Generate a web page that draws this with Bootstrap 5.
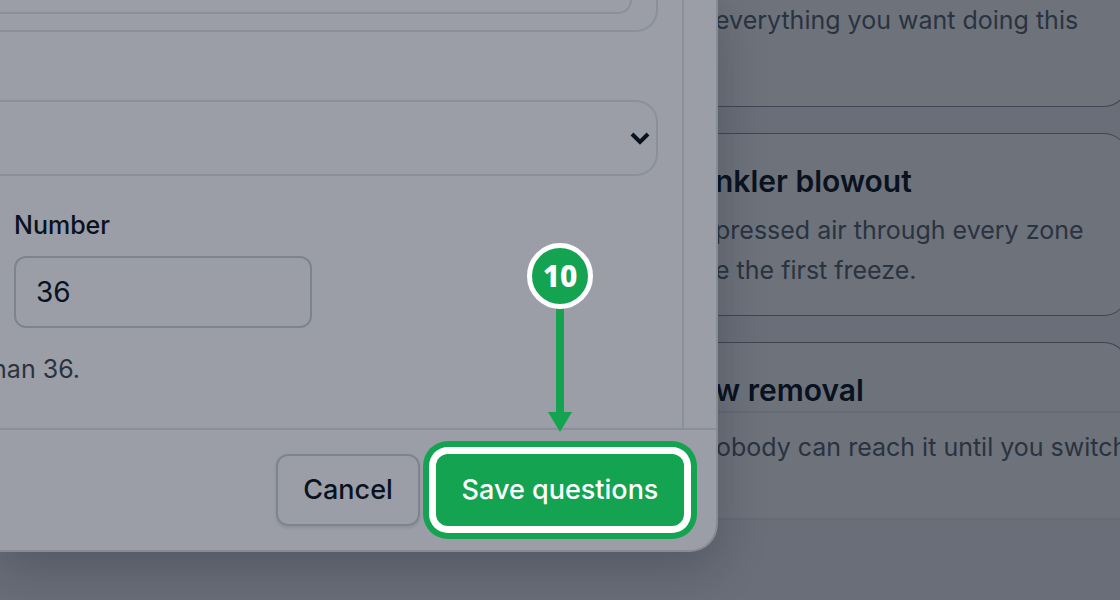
<!DOCTYPE html>
<html lang="en">
<head>
<meta charset="utf-8">
<meta name="viewport" content="width=device-width, initial-scale=1">
<title>Edit questions</title>
<link href="https://cdn.jsdelivr.net/npm/bootstrap@5.3.0/dist/css/bootstrap.min.css" rel="stylesheet">
<style>
  :root { --ink: #0a121f; --muted-ink: #2a3340; --surface: #9b9ea6; --line: #8b8f98; --field-line: #7e848e; --green: #14a350; }
  body { background: #696e79; color: var(--ink); font-family: Inter, "Liberation Sans", sans-serif; font-size: 25px; line-height: 40px; overflow: hidden; }
  .stage { display: grid; grid-template-columns: minmax(0, 1fr) 402px; min-height: 100vh; }
  .editor { background: var(--surface); border: 2px solid #878b94; border-width: 0 2px 2px 0; border-radius: 0 0 28px 0; box-shadow: 0 16px 48px rgba(20, 26, 38, .26); z-index: 2; }
  .pane { margin-right: 32px; padding-right: 24px; border-right: 2px solid var(--line); height: 428px; overflow: hidden; }
  .group-outer { height: 32px; padding-right: 24px; border: 2px solid var(--line); border-width: 0 2px 2px 0; border-radius: 0 0 22px 0; }
  .group-inner { height: 14px; border: 2px solid var(--line); border-width: 0 2px 2px 0; border-radius: 0 0 22px 0; }
  .picker { height: 76px; margin-top: 68px; border: 2px solid var(--line); border-left: 0; border-radius: 0 22px 22px 0; color: var(--ink); appearance: none;
    background: transparent url("data:image/svg+xml,%3Csvg xmlns='http://www.w3.org/2000/svg' width='20' height='16'%3E%3Cpath d='M2 4l8 8 8-8' fill='none' stroke='%230a121f' stroke-width='4'/%3E%3C/svg%3E") no-repeat right 6px center / 20px 16px; }
  .field { width: 298px; margin: 29px 0 0 14px; }
  .field label { font-weight: 500; }
  .field input { height: 72px; margin-top: 11px; padding: 0 20px; border: 2px solid var(--field-line); border-radius: 12px; background: transparent; color: var(--ink); font-size: 28px; }
  .hint { margin-top: 21px; color: var(--muted-ink); width: 80px; white-space: nowrap; }
  .actions { border-top: 2px solid var(--line); padding: 24px 32px 24px 0; gap: 16px; }
  .actions .btn { height: 72px; padding: 0; border-radius: 12px; font-size: 27px; font-weight: 500; }
  .btn-plain, .btn-plain:hover { width: 144px; border: 2px solid var(--field-line); color: var(--ink); box-shadow: 0 2px 3px rgba(20, 26, 38, .1); }
  .btn-save, .btn-save:hover { width: 248px; border: 0; background: var(--green); color: #fff; box-shadow: 0 0 0 7px #fff, 0 0 0 13px var(--green); }
  .pointer { left: 0; right: 0; bottom: 94px; pointer-events: none; }
  .step { width: 66px; height: 66px; border: 5px solid #fff; background: var(--green); color: #fff; font: 800 30px/56px "Noto Sans", sans-serif; text-align: center; }
  .shaft { width: 8px; height: 103px; background: var(--green); }
  .backdrop-list { margin: 0 -8px 0 -32px; color: var(--muted-ink); white-space: nowrap; }
  .service { background: #6d727b; border: 1px solid #3f4652; border-radius: 24px; padding: 0 0 0 28px; }
  .service h2 { margin: 0; font-size: 30px; line-height: 40px; font-weight: 600; color: var(--ink); }
  .service p, .notice p { margin: 0; }
  .svc-top { height: 107px; border-top: 0; border-radius: 0 0 24px 24px; }
  .svc-mid { height: 183px; margin-top: 26px; padding-top: 27px; }
  .svc-mid p { margin-top: 9px; }
  .svc-low { height: 69px; margin-top: 26px; padding-top: 27px; border-bottom: 0; border-radius: 24px 24px 0 0; }
  .notice { height: 109px; padding: 14px 0 0 30px; background: #6d727b; border: solid #656b75; border-width: 2px 0; }
</style>
</head>
<body>
<div class="stage">
  <section class="editor align-self-start position-relative">
    <div class="pane">
      <div class="group-outer"><div class="group-inner"></div></div>
      <select class="picker d-block w-100" aria-label="Condition"><option></option></select>
      <div class="field">
        <label for="num" class="d-block">Number</label>
        <input id="num" class="d-block w-100" type="text" value="36">
      </div>
      <div class="hint d-flex justify-content-end">han 36.</div>
    </div>
    <div class="actions d-flex justify-content-end">
      <button type="button" class="btn btn-plain">Cancel</button>
      <div class="position-relative">
        <button type="button" class="btn btn-save">Save questions</button>
        <div class="pointer position-absolute d-flex flex-column align-items-center">
          <div class="step rounded-circle">10</div>
          <div class="shaft"></div>
          <svg width="24" height="20" viewBox="0 0 24 20" aria-hidden="true"><path d="M0 0h24L12 20z" fill="#14a350"/></svg>
        </div>
      </div>
    </div>
  </section>
  <main class="backdrop-list">
    <article class="service svc-top"><p>everything you want doing this</p></article>
    <article class="service svc-mid">
      <h2>nkler blowout</h2>
      <p>pressed air through every zone<br>e the first freeze.</p>
    </article>
    <article class="service svc-low"><h2>w removal</h2></article>
    <div class="notice"><p>obody can reach it until you switch</p></div>
  </main>
</div>
<script src="https://cdn.jsdelivr.net/npm/bootstrap@5.3.0/dist/js/bootstrap.bundle.min.js"></script>
</body>
</html>
